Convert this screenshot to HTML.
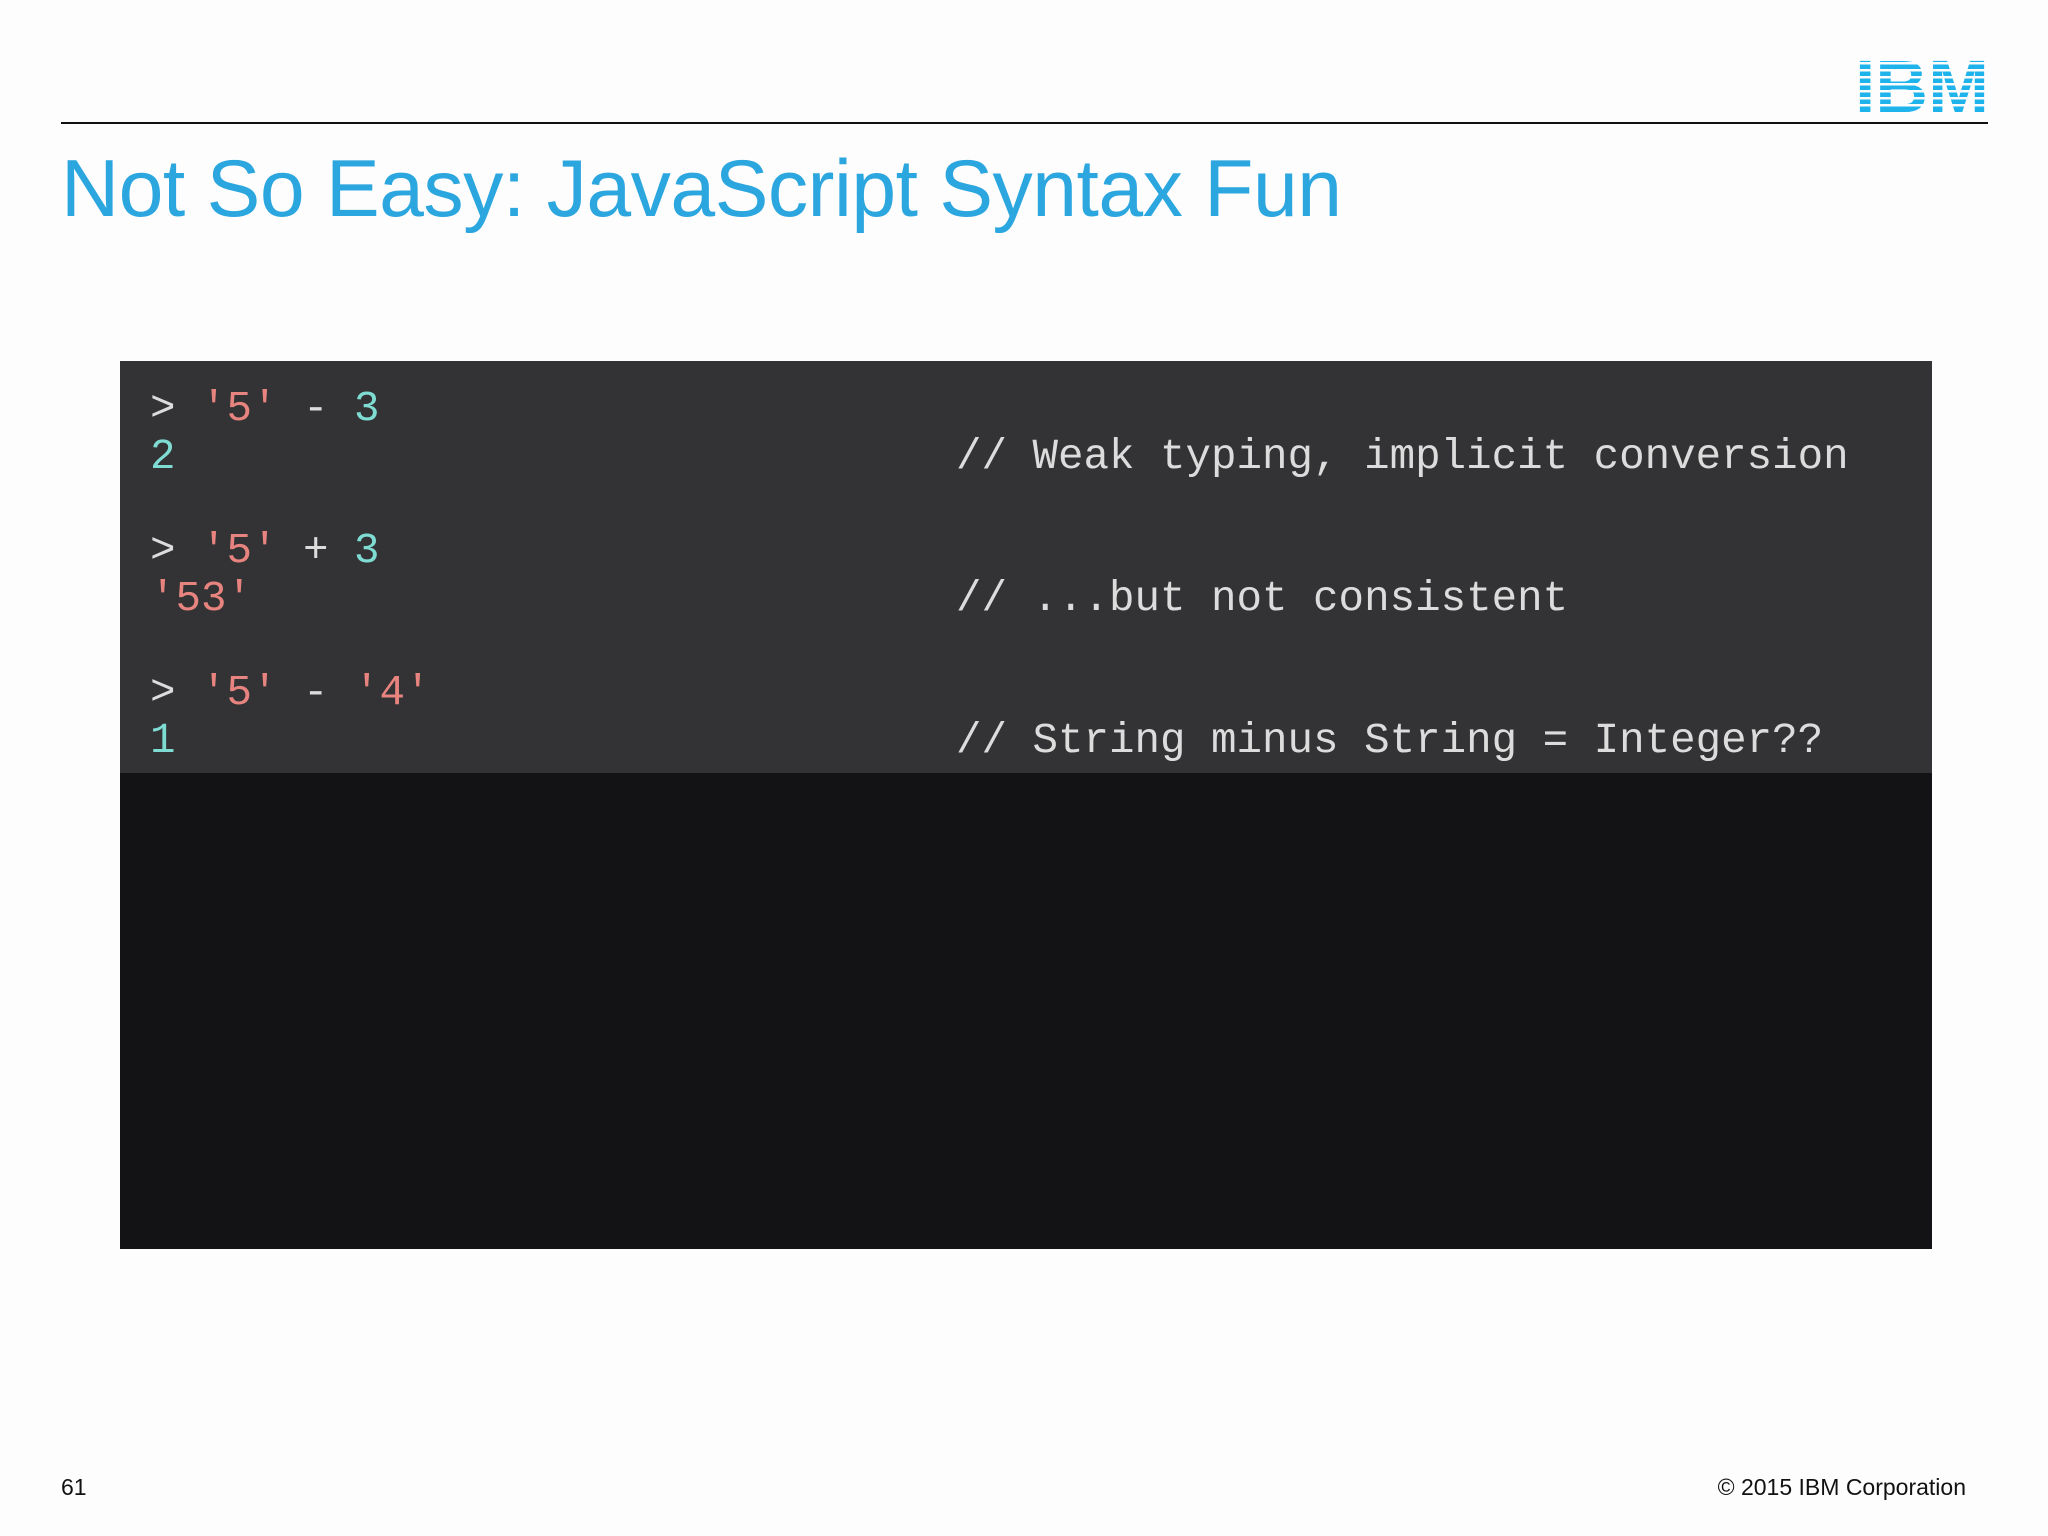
<!DOCTYPE html>
<html><head><meta charset="utf-8"><style>
html,body{margin:0;padding:0}
body{width:2048px;height:1536px;background:#fdfdfd;position:relative;overflow:hidden;font-family:"Liberation Sans",sans-serif}
.rule{position:absolute;left:61px;top:122px;width:1927px;height:2px;background:#111}
.title{position:absolute;left:61px;top:143px;font-size:80.5px;color:#2ba6df;white-space:nowrap;letter-spacing:-0.5px}
.box{position:absolute;left:120px;top:361px;width:1812px;height:888px;background:#131215}
.top{position:absolute;left:0;top:0;width:1812px;height:412px;background:#333234}
.ln{position:absolute;font-family:"Liberation Mono",monospace;font-size:42.5px;color:#dcdcdc;white-space:pre;line-height:50px}
.s{color:#e8847f}.n{color:#7fdcd2}
.foot{position:absolute;top:1474px;font-size:23px;color:#111}
</style></head><body>
<svg style="position:absolute;left:1855px;top:57px" width="134" height="56" viewBox="0 0 134 56">
<defs><mask id="m"><rect width="134" height="56" fill="white"/>
<g fill="black"><rect y="5" width="134" height="2.5"/><rect y="12" width="134" height="2.5"/><rect y="19" width="134" height="2.5"/><rect y="26" width="134" height="2.5"/><rect y="33" width="134" height="2.5"/><rect y="40" width="134" height="2.5"/><rect y="47" width="134" height="2.5"/></g></mask></defs>
<text x="67" y="55" text-anchor="middle" font-family="Liberation Sans,sans-serif" font-weight="bold" font-size="74" textLength="134" lengthAdjust="spacingAndGlyphs" fill="#1fb3ec" mask="url(#m)">IBM</text>
</svg>
<div class="rule"></div>
<div class="title">Not So Easy: JavaScript Syntax Fun</div>
<div class="box"><div class="top"></div></div>
<div class="ln" style="left:150px;top:384px">&gt; <span class="s">'5'</span> - <span class="n">3</span></div>
<div class="ln" style="left:150px;top:432px"><span class="n">2</span></div>
<div class="ln" style="left:956px;top:432px">// Weak typing, implicit conversion</div>
<div class="ln" style="left:150px;top:526px">&gt; <span class="s">'5'</span> + <span class="n">3</span></div>
<div class="ln" style="left:150px;top:574px"><span class="s">'53'</span></div>
<div class="ln" style="left:956px;top:574px">// ...but not consistent</div>
<div class="ln" style="left:150px;top:668px">&gt; <span class="s">'5'</span> - <span class="s">'4'</span></div>
<div class="ln" style="left:150px;top:716px"><span class="n">1</span></div>
<div class="ln" style="left:956px;top:716px">// String minus String = Integer??</div>
<div class="foot" style="left:61px">61</div>
<div class="foot" style="right:82px">© 2015 IBM Corporation</div>
</body></html>
